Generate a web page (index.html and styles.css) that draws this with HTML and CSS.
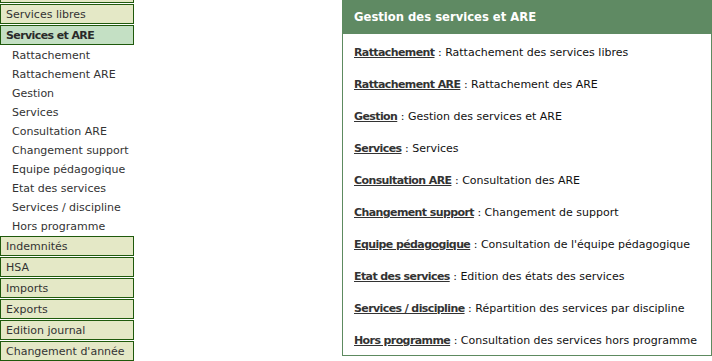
FILE: index.html
```html
<!DOCTYPE html>
<html lang="fr">
<head>
<meta charset="utf-8">
<title>Gestion des services et ARE</title>
<link rel="stylesheet" href="styles.css">
</head>
<body>
<div class="page">
  <nav class="sidebar">
    <div class="menu-box menu-edge" aria-hidden="true"></div>
    <a class="menu-box" href="#">Services libres</a>
    <a class="menu-box active" href="#">Services et ARE</a>
    <ul class="submenu">
      <li><a href="#">Rattachement</a></li>
      <li><a href="#">Rattachement ARE</a></li>
      <li><a href="#">Gestion</a></li>
      <li><a href="#">Services</a></li>
      <li><a href="#">Consultation ARE</a></li>
      <li><a href="#">Changement support</a></li>
      <li><a href="#">Equipe pédagogique</a></li>
      <li><a href="#">Etat des services</a></li>
      <li><a href="#">Services / discipline</a></li>
      <li><a href="#">Hors programme</a></li>
    </ul>
    <a class="menu-box" href="#">Indemnités</a>
    <a class="menu-box" href="#">HSA</a>
    <a class="menu-box" href="#">Imports</a>
    <a class="menu-box" href="#">Exports</a>
    <a class="menu-box" href="#">Edition journal</a>
    <a class="menu-box" href="#">Changement d'année</a>
  </nav>
  <main class="panel">
    <h1 class="panel-title">Gestion des services et ARE</h1>
    <ul class="panel-list">
      <li><a href="#">Rattachement</a> : Rattachement des services libres</li>
      <li><a href="#">Rattachement ARE</a> : Rattachement des ARE</li>
      <li><a href="#">Gestion</a> : Gestion des services et ARE</li>
      <li><a href="#">Services</a> : Services</li>
      <li><a href="#">Consultation ARE</a> : Consultation des ARE</li>
      <li><a href="#">Changement support</a> : Changement de support</li>
      <li><a href="#">Equipe pédagogique</a> : Consultation de l'équipe pédagogique</li>
      <li><a href="#">Etat des services</a> : Edition des états des services</li>
      <li><a href="#">Services / discipline</a> : Répartition des services par discipline</li>
      <li><a href="#">Hors programme</a> : Consultation des services hors programme</li>
    </ul>
  </main>
</div>
</body>
</html>
```
FILE: styles.css
```css
html, body {
  margin: 0;
  padding: 0;
  background: #ffffff;
}
body {
  font-family: "DejaVu Sans", Verdana, sans-serif;
  font-size: 11px;
  color: #333333;
  overflow: hidden;
}
.page {
  display: flex;
  align-items: flex-start;
}
.sidebar {
  width: 134px;
  flex: none;
  display: flex;
  flex-direction: column;
  margin-top: -17px;
}
.menu-box {
  display: block;
  box-sizing: border-box;
  height: 20px;
  line-height: 19px;
  margin-bottom: 1px;
  padding-left: 5px;
  border: 1px solid #1f5a0c;
  background: #e4e8c6;
  color: #333333;
  text-decoration: none;
  white-space: nowrap;
  overflow: hidden;
}
.menu-box.active {
  background: #c4e0c4;
  font-weight: bold;
  letter-spacing: -0.6px;
  color: #2a2a2a;
}
.submenu {
  list-style: none;
  margin: 0;
  padding: 0;
}
.submenu li {
  height: 19px;
  line-height: 19px;
  padding-left: 12px;
}
.submenu a {
  color: #333333;
  text-decoration: none;
}
.panel {
  box-sizing: border-box;
  width: 370px;
  height: 356px;
  margin-left: 208px;
  border: 1px solid #5d8a60;
  border-top: 0;
  background: #ffffff;
  overflow: hidden;
}
.panel-title {
  margin: 0;
  height: 34px;
  line-height: 35px;
  padding-left: 11px;
  background: #5f8a63;
  color: #ffffff;
  font-size: 11.6px;
  font-weight: bold;
}
.panel-list {
  list-style: none;
  margin: 0;
  padding: 3px 0 0 0;
}
.panel-list li {
  height: 32px;
  line-height: 32px;
  padding-left: 11px;
  color: #111111;
  white-space: nowrap;
}
.panel-list a {
  color: #333333;
  font-weight: bold;
  letter-spacing: -0.6px;
  text-decoration: underline;
}
```
